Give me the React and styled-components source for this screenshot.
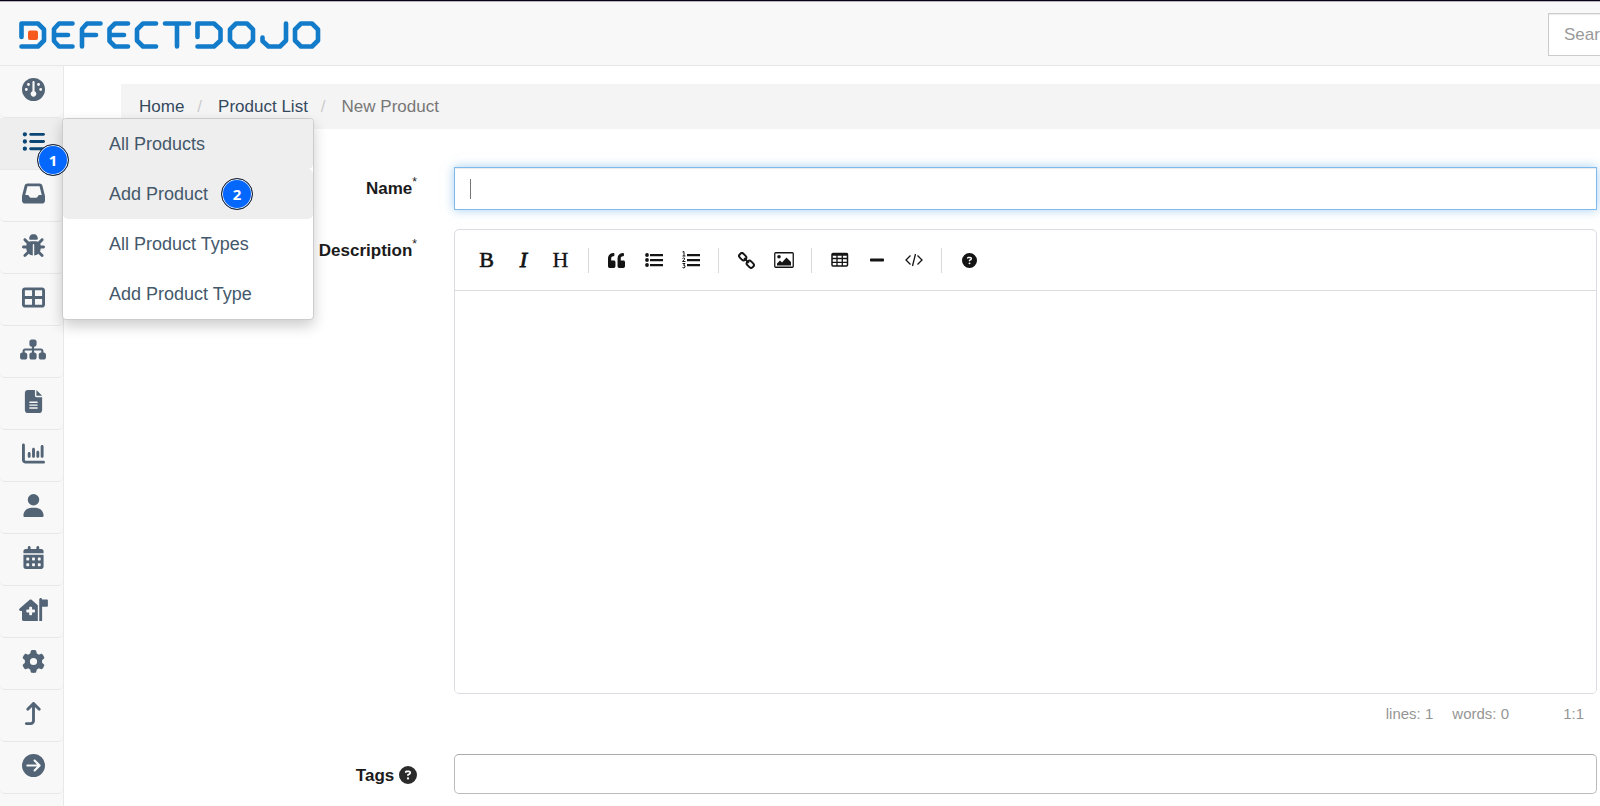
import React from 'react';
import styled, { createGlobalStyle, css } from 'styled-components';
import {
  FaGauge, FaListUl, FaInbox, FaBug, FaTableCellsLarge, FaSitemap, FaFileLines,
  FaChartColumn, FaUser, FaCalendarDays, FaHouseMedicalFlag, FaGear,
  FaArrowTurnUp, FaCircleArrowRight, FaCircleQuestion,
} from 'react-icons/fa6';
import { FaQuoteLeft, FaMinus } from 'react-icons/fa';

const Global = createGlobalStyle`
  *, *::before, *::after { box-sizing: border-box; }
  body {
    margin: 0;
    overflow: hidden;
    background: #fff;
    color: #1b1b1b;
    font: 17px/24px "Liberation Sans", Arial, sans-serif;
  }
  a { color: inherit; text-decoration: none; }
  button, input, textarea { font: inherit; }
`;

const Page = styled.div`
  min-height: 100vh;
  display: flex;
  flex-direction: column;
`;

const Header = styled.header`
  display: flex;
  align-items: flex-start;
  justify-content: space-between;
  height: 66px;
  padding: 12px 0 0 19px;
  background: #f8f8f8;
  border-top: 1px solid #0b0418;
  border-bottom: 1px solid #e7e7e7;
  box-shadow: inset 0 1px #b5b3bb;
  overflow: hidden;
`;

const Logo = styled.a`
  display: block;
  padding-top: 7px;
  svg { display: block; }
`;

const SearchSlot = styled.div`
  width: 52px;
  overflow: hidden;
`;

const SearchInput = styled.input`
  width: 240px;
  height: 43px;
  padding: 0 15px;
  border: 1px solid #ccc;
  box-shadow: inset 0 1px 1px rgba(0, 0, 0, 0.08);
  background: #fff;
  outline: 0;
  &::placeholder { color: #999; opacity: 1; }
`;

const Body = styled.div`
  flex: 1;
  display: flex;
`;

const Sidebar = styled.nav`
  flex: 0 0 64px;
  background: #f8f8f8;
  border-right: 1px solid #e9e9e9;
`;

const NavList = styled.ul`
  margin: 0;
  padding: 0;
  list-style: none;
`;

const NavItem = styled.li`
  position: relative;
`;

const NavLink = styled.a`
  display: flex;
  justify-content: center;
  height: 52px;
  padding: 12px 0 0 3px;
  border-bottom: 1px solid #e7e7e7;
  border-radius: 5px;
  color: #526475;
  svg { flex: none; width: ${(p) => p.$iconWidth}px; height: 23px; }
  ${(p) => p.$active && css`
    background: #eee;
    color: #0c4674;
    border-radius: 0;
  `}
`;

const Menu = styled.ul`
  position: absolute;
  z-index: 2;
  top: 0;
  left: 62px;
  width: 252px;
  margin: 0;
  padding: 0;
  list-style: none;
  background: #fff;
  border: 1px solid #ccc;
  border-radius: 4px;
  box-shadow: 0 6px 14px rgba(0, 0, 0, 0.2);
`;

const MenuLink = styled.a`
  display: flex;
  align-items: center;
  gap: 13px;
  height: 50px;
  padding-left: 46px;
  border-radius: 5px;
  font-size: 18px;
  color: #44586b;
  background: ${(p) => (p.$hover ? '#eee' : 'transparent')};
`;

const Step = styled.span`
  display: flex;
  align-items: center;
  justify-content: center;
  width: 32px;
  height: 32px;
  border: 1px solid #222;
  border-radius: 50%;
  background: #0468ff;
  box-shadow: inset 0 0 0 1px #e8eefc;
  color: #fff;
  font: bold 15px/20px "Open Sans", "Noto Sans", sans-serif;
`;

const PinnedStep = styled(Step)`
  position: absolute;
  z-index: 3;
  top: 26px;
  left: 37px;
`;

const Main = styled.main`
  flex: 1;
  min-width: 0;
  padding: 18px 0 0 57px;
`;

const Breadcrumb = styled.ol`
  display: flex;
  height: 45px;
  margin: 0 0 38px;
  padding: 11px 18px;
  list-style: none;
  background: #f4f4f4;
  color: #777;
`;

const Crumb = styled.li`
  & + &::before {
    content: "/";
    padding: 0 16px 0 13px;
    color: #ccc;
  }
  a { color: #34495e; }
`;

const Form = styled.form`
  display: grid;
  grid-template-columns: 296px minmax(0, 1fr);
  column-gap: 37px;
  padding-right: 3px;
`;

const Label = styled.label`
  padding-top: 10px;
  text-align: right;
  font-weight: bold;
  sup {
    font-size: 12px;
    font-weight: normal;
    line-height: 0;
    vertical-align: 8px;
  }
  svg { vertical-align: -3px; color: #2b2b2b; }
`;

const NameInput = styled.input`
  width: 100%;
  height: 43px;
  padding: 0 15px;
  border: 1px solid #80b9ec;
  outline: 0;
  box-shadow: inset 0 1px 1px rgba(0, 0, 0, 0.08), 0 0 10px rgba(102, 175, 233, 0.6);
  caret-color: #555;
`;

const NameField = styled.div`
  position: relative;
  height: 62px;
`;

const Caret = styled.span`
  position: absolute;
  top: 12px;
  left: 16px;
  width: 1px;
  height: 20px;
  background: #777;
`;

const Editor = styled.div`
  border: 1px solid #d9dce2;
  border-radius: 5px;
  overflow: hidden;
`;

const Toolbar = styled.div`
  display: flex;
  align-items: center;
  height: 61px;
  padding: 0 13px;
  border-bottom: 1px solid #dcdcde;
`;

const Tool = styled.button`
  display: flex;
  align-items: center;
  justify-content: center;
  width: 37px;
  height: 38px;
  padding: 0;
  border: 0;
  background: none;
  color: #141414;
`;

const Letter = styled.span`
  font: ${(p) => (p.$italic ? 'italic' : 'normal')} 22px/24px "Liberation Serif", "Times New Roman", serif;
  -webkit-text-stroke: ${(p) => p.$stroke} #141414;
`;

const Separator = styled.i`
  width: 1px;
  height: 25px;
  margin: 0 9px;
  background: #d9d9d9;
`;

const TextArea = styled.textarea`
  display: block;
  width: 100%;
  height: 402px;
  padding: 12px;
  border: 0;
  outline: 0;
  resize: none;
`;

const StatusBar = styled.div`
  display: flex;
  justify-content: flex-end;
  gap: 19px;
  height: 60px;
  padding: 8px 13px;
  color: #959694;
  font-size: 15px;
`;

const Position = styled.span`
  min-width: 56px;
  text-align: right;
`;

const TagsInput = styled.input`
  width: 100%;
  height: 40px;
  padding: 0 12px;
  border: 1px solid #bbb;
  border-top-color: #aaa;
  border-radius: 5px;
  outline: 0;
`;

const LogoArt = () => (
  <svg width="304" height="30" viewBox="0 0 304 30" fill="none" stroke="#127bca" strokeWidth="4.600" strokeLinecap="round" strokeLinejoin="round" role="img" aria-label="DefectDojo">
    <path d="M2.500 17V3.500H19L25 9.500V20.500L19 26.500H2.500" />
    <path d="M53.500 3.500H40L35 9V21L40 26.500H53.500M35 15H49" />
    <path d="M81.500 3.500H68L63 9V26.500M63 15H77" />
    <path d="M109 3.500H96L90.500 9V21L96 26.500H109M91 15H105" />
    <path d="M137 3.500H124L118 9.500V20.500L124 26.500H137" />
    <path d="M146 3.500H170M158 4V26.500" />
    <path d="M178.500 17V3.500H195L201.500 9.500V20.500L195 26.500H178.500" />
    <path d="M217 3.500H228L234 9.500V20.500L228 26.500H217L211 20.500V9.500Z" />
    <path d="M243.500 17.500V21L249.500 26.500H261L267 20.500V3.500" />
    <path d="M282 3.500H293L299 9.500V20.500L293 26.500H282L276 20.500V9.500Z" />
    <rect x="9" y="10.500" width="10" height="9.500" rx="2" fill="#f6581e" stroke="none" />
  </svg>
);

const BulletIcon = () => (
  <svg width="18" height="16" viewBox="0 0 18 16" fill="currentColor">
    <circle cx="2" cy="3" r="1.900" /><circle cx="2" cy="8" r="1.900" /><circle cx="2" cy="13" r="1.900" />
    <path d="M5 2H18V4.200H5zM5 7H18V9.200H5zM5 12H18V14.200H5z" />
  </svg>
);

const NumberedIcon = () => (
  <svg width="18" height="18" viewBox="0 0 18 18" fill="currentColor">
    <path d="M5 3H18V5.200H5zM5 8H18V10.200H5zM5 13H18V15.200H5z" />
    <path d="M.5 1L2 .5V5M.5 5H3.500M.5 7.500Q1.500 6.500 2.500 7.200T.5 10.500H3.500M.5 12.500H3L1.500 14.200Q3.500 14.200 3 16T.5 16.500" fill="none" stroke="currentColor" strokeWidth="1" />
  </svg>
);

const ChainIcon = () => (
  <svg width="17" height="17" viewBox="0 0 18 18" fill="none" stroke="currentColor" strokeWidth="2.100">
    <rect x="1" y="2.200" width="8" height="5.600" rx="2.500" transform="rotate(45 5 5)" />
    <rect x="9" y="10.200" width="8" height="5.600" rx="2.500" transform="rotate(45 13 13)" />
    <path d="M6.500 6.500L11.500 11.500" />
  </svg>
);

const PictureIcon = () => (
  <svg width="20" height="16" viewBox="0 0 20 16" fill="currentColor">
    <rect x=".75" y=".75" width="18.500" height="14.500" rx="1" fill="none" stroke="currentColor" strokeWidth="1.300" />
    <circle cx="5" cy="4.800" r="1.800" /><path d="M3 13.500V11.500L6 8.500L8 10.500L12.500 5.500L17 10V13.500Z" />
  </svg>
);

const GridIcon = () => (
  <svg width="18" height="16" viewBox="0 0 18 16" fill="none" stroke="currentColor">
    <rect x="1" y="1.500" width="15.500" height="12.500" rx="1" strokeWidth="1.500" />
    <path d="M1 2.500H16.500" strokeWidth="2.500" /><path d="M1 6.500H17M1 10.300H17M6 3V14M11.300 3V14" strokeWidth="1.300" />
  </svg>
);

const CodeIcon = () => (
  <svg width="18" height="14" viewBox="0 0 18 14" fill="none" stroke="currentColor" strokeWidth="1.300">
    <path d="M5.500 2.500L1 7L5.500 11.500M12.500 2.500L17 7L12.500 11.500M10.500 1L7.500 13" />
  </svg>
);

const navigation = [
  ['Dashboard', FaGauge], ['Products', FaListUl], ['Engagements', FaInbox], ['Findings', FaBug],
  ['Components', FaTableCellsLarge], ['Endpoints', FaSitemap, 26], ['Reports', FaFileLines],
  ['Metrics', FaChartColumn], ['Users', FaUser], ['Calendar', FaCalendarDays],
  ['Questionnaires', FaHouseMedicalFlag, 29], ['Configuration', FaGear],
  ['Upgrade', FaArrowTurnUp], ['Expand menu', FaCircleArrowRight],
];

const productMenu = ['All Products', 'Add Product', 'All Product Types', 'Add Product Type'];

const tools = [
  ['Bold', <Letter $stroke="0.6px">B</Letter>], ['Italic', <Letter $italic $stroke="0.8px">I</Letter>], ['Heading', <Letter $stroke="0.3px">H</Letter>], null,
  ['Quote', <FaQuoteLeft size={17} />], ['Bulleted list', <BulletIcon />], ['Numbered list', <NumberedIcon />], null,
  ['Link', <ChainIcon />], ['Image', <PictureIcon />], null,
  ['Table', <GridIcon />], ['Horizontal line', <FaMinus size={16} />], ['Code', <CodeIcon />], null,
  ['Guide', <FaCircleQuestion size={15} />],
];

function ProductMenu() {
  return (
    <Menu>
      {productMenu.map((text, i) => (
        <li key={text}>
          <MenuLink href="#" $hover={i < 2}>{text}{i === 1 && <Step>2</Step>}</MenuLink>
        </li>
      ))}
    </Menu>
  );
}

export default function App() {
  return (
    <Page>
      <Global />
      <Header>
        <Logo href="#"><LogoArt /></Logo>
        <SearchSlot><SearchInput type="text" placeholder="Search..." aria-label="Search" /></SearchSlot>
      </Header>
      <Body>
        <Sidebar>
          <NavList>
            {navigation.map(([name, Icon, width = 23], i) => (
              <NavItem key={name}>
                <NavLink href="#" aria-label={name} $active={i === 1} $iconWidth={width}><Icon /></NavLink>
                {i === 1 && <><ProductMenu /><PinnedStep>1</PinnedStep></>}
              </NavItem>
            ))}
          </NavList>
        </Sidebar>
        <Main>
          <Breadcrumb>
            <Crumb><a href="#">Home</a></Crumb>
            <Crumb><a href="#">Product List</a></Crumb>
            <Crumb>New Product</Crumb>
          </Breadcrumb>
          <Form>
            <Label htmlFor="name">Name<sup>*</sup></Label>
            <NameField><NameInput id="name" type="text" /><Caret /></NameField>
            <Label htmlFor="description">Description<sup>*</sup></Label>
            <div>
              <Editor>
                <Toolbar>
                  {tools.map((tool, i) => tool
                    ? <Tool key={tool[0]} type="button" aria-label={tool[0]}>{tool[1]}</Tool>
                    : <Separator key={i} />)}
                </Toolbar>
                <TextArea id="description" />
              </Editor>
              <StatusBar><span>lines: 1</span><span>words: 0</span><Position>1:1</Position></StatusBar>
            </div>
            <Label htmlFor="tags">Tags <FaCircleQuestion size={18} /></Label>
            <TagsInput id="tags" type="text" />
          </Form>
        </Main>
      </Body>
    </Page>
  );
}
